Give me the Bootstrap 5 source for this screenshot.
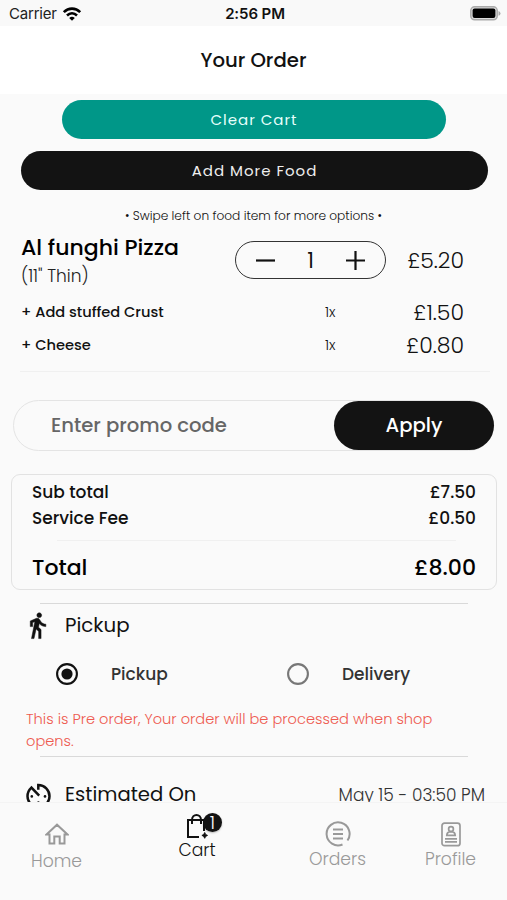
<!DOCTYPE html>
<html lang="en">
<head>
<meta charset="utf-8">
<meta name="viewport" content="width=device-width, initial-scale=1">
<title>Your Order</title>
<link href="https://cdn.jsdelivr.net/npm/bootstrap@5.3.0/dist/css/bootstrap.min.css" rel="stylesheet">
<style>
  body { font-family: Poppins, Inter, "Open Sans", sans-serif; background: #fafafa; color: #111; height: 900px; overflow: hidden; line-height: 1; }
  svg { display: block; flex: none; }
  .status-bar { font-family: Inter, sans-serif; height: 26px; background: #f9f9f9; padding: 1px 6px 0 9px; font-size: 15px; }
  .status-bar .carrier { letter-spacing: -.2px; width: 160px; color: #222; gap: 5px; }
  .status-bar .clock { font-weight: 600; letter-spacing: -.1px; }
  .status-bar .power { width: 160px; }
  .title-bar { height: 68px; padding-top: 2px; font-size: 19.700px; font-weight: 500; }
  .screen { height: 708px; padding-top: 6px; }
  .pill { height: 39px; padding: 0; border: 0; border-radius: 20px; font-size: 15px; color: #fff; line-height: 39px; }
  .pill-clear { background: #009788; margin: 0 61px 0 62px; letter-spacing: 1px; color: #e6fffb; }
  .pill-add { background: #131313; margin: 12px 19px 0 21px; letter-spacing: 1px; color: #eee; }
  .tip { margin-top: 16px; height: 20px; line-height: 20px; font-size: 12.200px; font-weight: 300; }
  .order-item { margin-top: 5px; height: 58px; padding: 0 43px 0 21px; }
  .item-name { font-size: 22px; font-weight: 500; line-height: 28px; color: #000; padding-top: 3px; }
  .item-size { font-size: 17px; font-weight: 300; line-height: 28px; color: #222; }
  .stepper { width: 151px; height: 38px; border: 1.4px solid #333; border-radius: 19px; padding: 0 20px; }
  .stepper span { font-size: 21px; }
  .price { font-size: 22px; font-weight: 300; width: 78px; text-align: right; padding-top: 1px; }
  .addon { height: 33px; padding: 1px 43px 0 21px; font-size: 14.600px; font-weight: 500; }
  .addon .qty { font-size: 14px; font-weight: 300; width: 61px; padding-bottom: 1px; }
  .rule { height: 1px; background: #f0f0f0; }
  .rule-dark { background: #d9d9d9; margin: 0 39px 0 40px; }
  .promo { margin: 28px 13px 0 13px; height: 51px; border: 1px solid #e4e4e4; border-radius: 26px; font-size: 19.600px; font-weight: 500; }
  .promo-hint { padding-left: 37px; color: #666; }
  .promo-apply { width: 160px; height: 49px; border-radius: 25px; background: #131313; color: #fff; font-size: 19.600px; font-weight: 500; padding: 0; border: 0; margin-right: -1px; }
  .totals { margin: 23px 10px 0 11px; height: 116px; border: 1px solid #e2e2e2; border-radius: 9px; padding: 4px 20px 0; font-size: 17px; font-weight: 500; }
  .totals .line { height: 26px; }
  .totals .line-total { height: 54px; font-size: 22px; color: #000; }
  .section-head { height: 32px; padding: 0 22px 0 25px; font-size: 19.800px; }
  .section-head .glyph { width: 40px; }
  .modes { height: 32px; margin-top: 16px; padding-left: 56px; font-size: 17px; font-weight: 500; color: #333; }
  .mode { width: 231px; gap: 33px; }
  .notice { margin: 18px 60px 0 26px; font-size: 14.620px; font-weight: 300; line-height: 22px; color: #ee5a50; height: 48px; }
  .eta { font-size: 19.600px; }
  .when { font-size: 17px; font-weight: 300; color: #333; }
  .tabs { height: 98px; border-top: 1px solid #f4f4f4; background: #fafafa; font-size: 17.200px; font-weight: 300; color: #999; }
  .tab { width: 113px; }
  .tab-wide { width: 168px; color: #111; }
  .count { position: absolute; left: 17px; top: 0; width: 19px; height: 19px; border-radius: 50%; background: #131313; color: #fff; font-size: 18px; box-shadow: 0 1px 2px #0004; }
</style>
<script src="https://cdn.jsdelivr.net/npm/bootstrap@5.3.0/dist/js/bootstrap.bundle.min.js"></script>
</head>
<body class="d-flex flex-column">
<div class="status-bar d-flex align-items-center justify-content-between">
  <div class="carrier d-flex align-items-center"><span>Carrier</span>
    <svg width="20" height="16" viewBox="0 0 20 16" fill="none" stroke="#000" stroke-width="2.6"><path d="M1.8 6.2C6.5 1.4 13.500 1.400 18.200 6.200M5 9.500C8 6.600 12 6.600 15 9.500"/><path d="M10 14.800 7.200 11.900Q10 9.800 12.800 11.900Z" fill="#000" stroke="none"/></svg>
  </div>
  <span class="clock">2:56 PM</span>
  <div class="power d-flex justify-content-end"><svg width="31" height="15" viewBox="0 0 31 15"><rect x=".8" y=".8" width="26.400" height="13" rx="3.800" fill="#ddd" stroke="#aaa" stroke-width="1.500"/><rect x="2.600" y="2.500" width="22.800" height="9.600" rx="2" fill="#000"/><path d="M28.500 5v4.800q2-.8 2-2.400t-2-2.400" fill="#aaa"/></svg></div>
</div>
<header class="title-bar bg-white d-flex align-items-center justify-content-center">Your Order</header>

<main class="screen overflow-hidden flex-shrink-0">
  <div class="d-grid">
    <button class="btn pill pill-clear">Clear Cart</button>
    <button class="btn pill pill-add">Add More Food</button>
  </div>
  <div class="tip text-center">• Swipe left on food item for more options •</div>

  <div class="order-item d-flex align-items-center">
    <div class="flex-grow-1"><div class="item-name">Al funghi Pizza</div><div class="item-size">(11" Thin)</div></div>
    <div class="stepper d-flex align-items-center justify-content-between">
      <svg width="19" height="19" stroke="#111" stroke-width="2.200"><path d="M0 9.500h19"/></svg>
      <span>1</span>
      <svg width="19" height="19" stroke="#111" stroke-width="2.200"><path d="M0 9.500h19M9.500 0v19"/></svg>
    </div>
    <div class="price">£5.20</div>
  </div>
  <div class="addon d-flex align-items-center" style="margin-top:6px"><span class="flex-grow-1">+ Add stuffed Crust</span><span class="qty">1x</span><span class="price">£1.50</span></div>
  <div class="addon d-flex align-items-center"><span class="flex-grow-1">+ Cheese</span><span class="qty">1x</span><span class="price">£0.80</span></div>
  <div class="rule" style="margin:10px 17px 0 20px"></div>

  <div class="promo d-flex align-items-center justify-content-between">
    <span class="promo-hint">Enter promo code</span>
    <button class="btn promo-apply">Apply</button>
  </div>

  <section class="totals">
    <div class="line d-flex align-items-center justify-content-between"><span>Sub total</span><span>£7.50</span></div>
    <div class="line d-flex align-items-center justify-content-between"><span>Service Fee</span><span>£0.50</span></div>
    <div class="rule" style="margin:9px 20px 0 25px"></div>
    <div class="line-total d-flex align-items-center justify-content-between"><span>Total</span><span>£8.00</span></div>
  </section>

  <div class="rule rule-dark" style="margin-top:13px"></div>
  <div class="section-head d-flex align-items-center" style="margin-top:6px">
    <span class="glyph"><svg width="26" height="30" viewBox="1.600 0 21.700 25"><path fill="#111" stroke="#111" stroke-width=".4" d="M13.500 5.500c1.100 0 2-.9 2-2s-.9-2-2-2-2 .9-2 2 .9 2 2 2zM9.800 8.900 7 23h2.100l1.800-8 2.100 2v6h2v-7.500l-2.100-2 .6-3C14.800 12 16.800 13 19 13v-2c-1.900 0-3.500-1-4.300-2.400l-1-1.600c-.4-.6-1-1-1.700-1-.3 0-.5.100-.8.100L6 8.300V13h2V9.600l1.800-.7"/></svg></span>
    <span>Pickup</span>
  </div>
  <div class="modes d-flex">
    <div class="mode d-flex align-items-center flex-shrink-0"><svg width="22" height="22" viewBox="0 0 22 22"><circle cx="11" cy="11" r="9.900" fill="none" stroke="#111" stroke-width="2.100"/><circle cx="11" cy="11" r="5.600" fill="#111"/></svg><span>Pickup</span></div>
    <div class="mode d-flex align-items-center flex-shrink-0"><svg width="22" height="22" viewBox="0 0 22 22"><circle cx="11" cy="11" r="9.900" fill="none" stroke="#777" stroke-width="2.100"/></svg><span>Delivery</span></div>
  </div>
  <div class="notice">This is Pre order, Your order will be processed when shop opens.</div>
  <div class="rule rule-dark"></div>
  <div class="section-head d-flex align-items-center" style="margin-top:22px">
    <span class="glyph"><svg width="27" height="27" viewBox="0 0 27 27" fill="none" stroke="#111" stroke-width="2.500"><path d="M13.300 7.800V3C19.600 3 24.500 8 24.500 14.200S19.500 25.200 13.500 25.200 2.500 20.300 2.500 14.200C2.500 10.700 4.100 7.700 6.400 5.600L14.200 13.600"/><g fill="#111" stroke="none"><circle cx="6.800" cy="14.400" r="1.300"/><circle cx="20" cy="14.400" r="1.300"/><circle cx="13.400" cy="20.500" r="1.300"/></g></svg></span>
    <span class="eta flex-grow-1">Estimated On</span>
    <span class="when">May 15 - 03:50 PM</span>
  </div>
</main>

<nav class="tabs d-flex flex-shrink-0">
  <div class="tab d-flex flex-column align-items-center" style="padding-top:20px">
    <svg width="24" height="22" viewBox="0 0 24 22" fill="none" stroke="#999" stroke-width="2"><path d="M1.500 11.500 12 1.700 22.500 11.500H19.500V20.500H14.700V13.500H9.300V20.500H4.500V11.500Z"/></svg>
    <span style="margin-top:8px">Home</span>
  </div>
  <div class="tab-wide d-flex flex-column align-items-center" style="padding-top:10px">
    <div class="position-relative">
      <svg width="22" height="26" viewBox="0 0 22 26" fill="none" stroke="#111" stroke-width="2"><path d="M13 24H2V7H18V18M6 11V7C6 .300 15 .300 15 7V11"/><path d="M18.700 19.500q.5 2.400 2.800 2.900-2.300.5-2.800 2.900-.5-2.400-2.800-2.900 2.300-.5 2.800-2.900" fill="#111" stroke-width=".9"/></svg>
      <span class="count d-flex align-items-center justify-content-center">1</span>
    </div>
    <span style="margin-top:3px">Cart</span>
  </div>
  <div class="tab d-flex flex-column align-items-center" style="padding-top:18px">
    <svg width="26" height="26" viewBox="0 0 26 26" fill="none" stroke="#999" stroke-width="2"><path d="M17.500 23.500A11.500 11.500 0 1 1 22.500 19.500M8 8.500h10M8 13h10M8 17.500h10"/></svg>
    <span style="margin-top:4px">Orders</span>
  </div>
  <div class="tab d-flex flex-column align-items-center" style="padding-top:19px">
    <svg width="20" height="25" viewBox="0 0 20 25" fill="none" stroke="#999" stroke-width="1.700"><rect x="1" y="1.200" width="18" height="22.500" rx="2.500"/><circle cx="10" cy="7" r="2.400"/><path d="M5.800 13.300Q6 10 8.500 10H11.500Q14 10 14.200 13.300ZM4 16.800h12M4 19.800h12"/></svg>
    <span style="margin-top:4px">Profile</span>
  </div>
</nav>
</body>
</html>
